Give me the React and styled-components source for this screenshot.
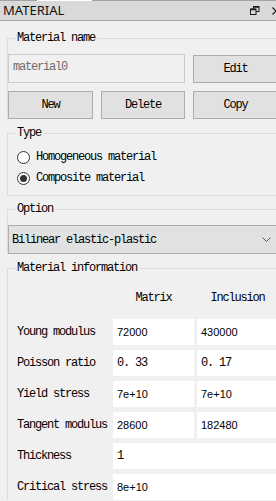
import React from "react";
import styled, { createGlobalStyle } from "styled-components";

const GlobalStyle = createGlobalStyle`
  html, body { margin: 0; padding: 0; background: #f0f0f0; }
  body { width: 276px; height: 501px; overflow: hidden; }
  #root { width: 276px; height: 501px; overflow: hidden; }
  * { box-sizing: border-box; }
`;

const MONO = `"Liberation Mono", "DejaVu Sans Mono", monospace`;

const Panel = styled.div`
  width: 290px;
  height: 501px;
  background: #f0f0f0;
  font-family: ${MONO};
  font-size: 12px;
  letter-spacing: -1.2px;
  color: #000;
`;

const TopEdge = styled.div`
  height: 1px;
  background: linear-gradient(
    to right,
    #a3a3a3 37px,
    #ffffff 37px,
    #ffffff 92px,
    #a3a3a3 92px
  );
`;

const TitleBar = styled.div`
  display: flex;
  align-items: center;
  height: 20px;
  padding: 0 10px 0 3px;
  background: #d9d9d9;
  border-bottom: 1px solid #a6a6a6;
`;

const Title = styled.span`
  flex: 1;
  font-family: "Noto Sans", "Liberation Sans", sans-serif;
  font-size: 13px;
  letter-spacing: 0;
  line-height: 19px;
  color: #111;
`;

const TitleIcon = styled.svg`
  display: block;
  margin-left: ${(p) => p.$ml || 0}px;
`;

const Body = styled.div`
  padding-left: 7px;
`;

const Group = styled.fieldset`
  margin: ${(p) => p.$mt}px 0 0;
  padding: ${(p) => p.$pt}px 0 ${(p) => p.$pb || 0}px;
  border: 1px solid #dcdcdc;
  border-bottom-width: ${(p) => (p.$bottom ? 1 : 0)}px;
  min-width: 0;
`;

const Legend = styled.legend`
  margin-left: 7px;
  padding: 0 2px;
  height: 12px;
  line-height: 12px;
  font-size: 12px;
`;

const NameGrid = styled.div`
  display: grid;
  grid-template-columns: 85px 84px 85px;
  grid-template-rows: 29px 28px;
  column-gap: 8px;
  row-gap: 8px;
`;

const NameInput = styled.div`
  grid-column: 1 / 3;
  border: 1px solid #cccccc;
  background: #f0f0f0;
  color: #6d6d6d;
  padding: 6px 0 0 4px;
  line-height: 12px;
`;

const Button = styled.div`
  display: flex;
  align-items: center;
  justify-content: center;
  background: #e1e1e1;
  border: 1px solid #adadad;
  margin-top: ${(p) => p.$mt || 0}px;
`;

const RadioList = styled.div`
  display: flex;
  flex-direction: column;
  gap: 1px;
  padding-left: 9px;
`;

const RadioRow = styled.div`
  display: flex;
  align-items: center;
  height: 20px;
  gap: 6px;
`;

const RadioCircle = styled.span`
  width: 13px;
  height: 13px;
  border-radius: 50%;
  border: 1px solid #333;
  background: #fff;
  display: grid;
  place-items: center;

  &::after {
    content: "";
    width: 7px;
    height: 7px;
    border-radius: 50%;
    background: ${(p) => (p.$checked ? "#333" : "transparent")};
  }
`;

const Combo = styled.div`
  display: flex;
  align-items: center;
  height: 29px;
  padding: 0 0 0 3px;
  background: #e1e1e1;
  border: 1px solid #adadad;
`;

const ComboText = styled.span`
  flex: 1;
`;

const Chevron = styled.svg`
  display: block;
  margin-right: 17px;
`;

const InfoGrid = styled.div`
  display: grid;
  grid-template-columns: 102px 81px 81px;
  grid-auto-rows: 26px;
  column-gap: 3px;
  row-gap: 5px;
`;

const HeadCell = styled.div`
  grid-column: ${(p) => p.$col};
  height: 20px;
  margin-bottom: 5px;
  display: flex;
  align-items: center;
  justify-content: ${(p) => (p.$center ? "center" : "flex-start")};
`;

const RowLabel = styled.div`
  display: flex;
  align-items: center;
  padding-left: 9px;
  white-space: nowrap;
`;

const Field = styled.div`
  grid-column: ${(p) => (p.$wide ? "2 / 4" : "auto")};
  display: flex;
  align-items: center;
  padding-left: 4px;
  background: #fff;
  font-family: ${(p) => (p.$sans ? `"Liberation Sans", Arial, sans-serif` : MONO)};
  font-size: ${(p) => (p.$sans ? 11 : 12)}px;
  letter-spacing: ${(p) => (p.$sans ? 0 : -1.2)}px;
`;

const rows = [
  { label: "Young modulus", a: "72000", b: "430000", sans: true },
  { label: "Poisson ratio", a: "0. 33", b: "0. 17", sans: false },
  { label: "Yield stress", a: "7e+10", b: "7e+10", sans: true },
  { label: "Tangent modulus", a: "28600", b: "182480", sans: true },
  { label: "Thickness", a: "1", wide: true, sans: false },
  { label: "Critical stress", a: "8e+10", wide: true, sans: true },
];

export default function App() {
  return (
    <>
      <GlobalStyle />
      <Panel>
        <TopEdge />
        <TitleBar>
          <Title>MATERIAL</Title>
          <TitleIcon width="10" height="9" viewBox="0 0 10 9">
            <rect x="3.5" y="0.5" width="5.5" height="5" fill="none" stroke="#1a1a1a" />
            <rect x="0.5" y="3" width="5.5" height="5.5" fill="#d9d9d9" stroke="#1a1a1a" />
            <line x1="0.5" y1="3.5" x2="6" y2="3.5" stroke="#1a1a1a" strokeWidth="1.5" />
            <line x1="3.5" y1="1" x2="9" y2="1" stroke="#1a1a1a" strokeWidth="1.5" />
          </TitleIcon>
          <TitleIcon width="8" height="8" viewBox="0 0 8 8" $ml={12}>
            <path d="M0.5 0.5 L7.5 7.5 M7.5 0.5 L0.5 7.5" stroke="#1a1a1a" strokeWidth="1.2" />
          </TitleIcon>
        </TitleBar>
        <Body>
          <Group $mt={11} $pt={10}>
            <Legend>Material name</Legend>
            <NameGrid>
              <NameInput>material0</NameInput>
              <Button $mt={1}>Edit</Button>
              <Button>New</Button>
              <Button>Delete</Button>
              <Button>Copy</Button>
            </NameGrid>
          </Group>

          <Group $mt={8} $pt={8} $pb={7} $bottom>
            <Legend>Type</Legend>
            <RadioList>
              <RadioRow>
                <RadioCircle />
                <span>Homogeneous material</span>
              </RadioRow>
              <RadioRow>
                <RadioCircle $checked />
                <span>Composite material</span>
              </RadioRow>
            </RadioList>
          </Group>

          <Group $mt={7} $pt={10}>
            <Legend>Option</Legend>
            <Combo>
              <ComboText>Bilinear elastic-plastic</ComboText>
              <Chevron width="9" height="5" viewBox="0 0 9 5">
                <path d="M0.5 0.5 L4.5 4.5 L8.5 0.5" fill="none" stroke="#555" strokeWidth="1" />
              </Chevron>
            </Combo>
          </Group>

          <Group $mt={8} $pt={14}>
            <Legend>Material information</Legend>
            <InfoGrid>
              <HeadCell $col="2" $center>Matrix</HeadCell>
              <HeadCell $col="3" $center>Inclusion</HeadCell>
              {rows.map((r) => (
                <React.Fragment key={r.label}>
                  <RowLabel>{r.label}</RowLabel>
                  <Field $sans={r.sans} $wide={r.wide}>{r.a}</Field>
                  {!r.wide && <Field $sans={r.sans}>{r.b}</Field>}
                </React.Fragment>
              ))}
            </InfoGrid>
          </Group>
        </Body>
      </Panel>
    </>
  );
}
